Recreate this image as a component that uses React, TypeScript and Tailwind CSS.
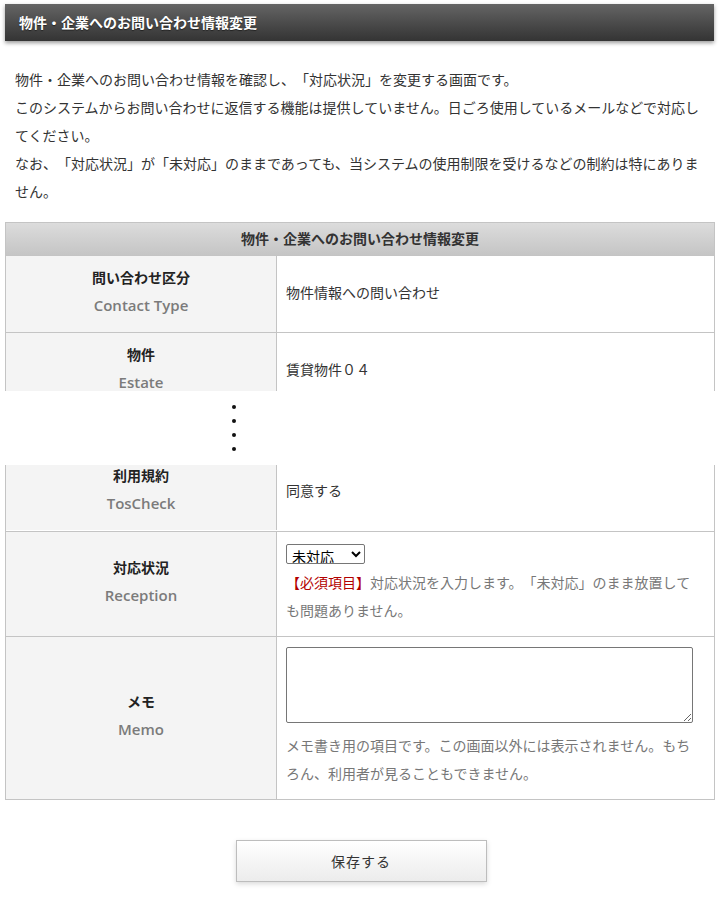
import React from "react";

const JP = "font-['Noto_Sans_CJK_JP',sans-serif]";
const EN = "font-['Open_Sans','Noto_Sans_CJK_JP',sans-serif]";

function LabelCell({ ja, en }: { ja: string; en: string }) {
  return (
    <div className="flex w-[271px] shrink-0 flex-col items-center justify-center border-r border-[#c4c4c4] bg-[#f4f4f4] pt-[7px] pb-[13px] text-center leading-[28px]">
      <span className="font-bold text-[#222]">{ja}</span>
      <span className={`${EN} text-[15px] font-semibold text-[#7b7b7b]`}>{en}</span>
    </div>
  );
}

function Row({
  ja,
  en,
  children,
  first = false,
}: {
  ja: string;
  en: string;
  children: React.ReactNode;
  first?: boolean;
}) {
  return (
    <div className={`flex ${first ? "" : "border-t border-[#c4c4c4]"}`}>
      <LabelCell ja={ja} en={en} />
      <div className="flex flex-1 flex-col justify-center pt-[8px] pb-[12px] pl-[9px] pr-[20px] leading-[28px] text-[#333]">
        {children}
      </div>
    </div>
  );
}

function Dots() {
  return (
    <div className="flex h-[74px] flex-col justify-center pl-[227px]">
      <div className="flex flex-col gap-[10px]">
        {[0, 1, 2, 3].map((i) => (
          <span key={i} className="block h-[4px] w-[4px] rounded-full bg-[#111]" />
        ))}
      </div>
    </div>
  );
}

export default function App() {
  return (
    <div className={`${JP} min-h-[899px] bg-white pt-[4px] text-[14px] text-[#333] [text-spacing-trim:space-all]`}>
      <div className="mx-[5px] flex h-[37px] items-center bg-gradient-to-b from-[#656565] to-[#343434] pl-[14px] shadow-[0_2px_4px_rgba(0,0,0,0.4)]">
        <h1 className="text-[14px] font-bold text-white [text-shadow:0_1px_1px_rgba(0,0,0,0.5)]">
          物件・企業へのお問い合わせ情報変更
        </h1>
      </div>

      <div className="mt-[24px] px-[15px] leading-[28px] text-[#333]">
        <p>物件・企業へのお問い合わせ情報を確認し、「対応状況」を変更する画面です。</p>
        <p>
          このシステムからお問い合わせに返信する機能は提供していません。日ごろ使用しているメールなどで対応してください。
        </p>
        <p>
          なお、「対応状況」が「未対応」のままであっても、当システムの使用制限を受けるなどの制約は特にありません。
        </p>
      </div>

      <div className="mx-[5px] mt-[17px] w-[710px]">
        <div className="border-x border-t border-[#c4c4c4]">
          <div className="flex h-[32px] items-center justify-center bg-gradient-to-b from-[#dcdcdc] to-[#c5c5c5] pb-[1px] font-bold text-[#333]">
            物件・企業へのお問い合わせ情報変更
          </div>
          <Row ja="問い合わせ区分" en="Contact Type">
            物件情報への問い合わせ
          </Row>
          <div className="h-[59px] overflow-hidden">
            <Row ja="物件" en="Estate">
              賃貸物件０４
            </Row>
          </div>
        </div>

        <Dots />

        <div className="border-x border-b border-[#c4c4c4]">
          <div className="h-[66px] overflow-hidden">
            <div className="-mt-[11px]">
              <Row ja="利用規約" en="TosCheck" first>
                同意する
              </Row>
            </div>
          </div>
          <Row ja="対応状況" en="Reception">
            <div className="flex h-[28px] items-center">
              <select
                defaultValue="未対応"
                className="h-[20px] w-[79px] rounded-[2px] border border-[#767676] bg-white py-0 pl-[1px] pr-0 text-[14px] leading-[18px] text-black"
              >
                <option>未対応</option>
                <option>対応中</option>
                <option>対応済</option>
              </select>
            </div>
            <p className="text-[#777]">
              <span className="text-[#b30000]">【必須項目】</span>
              対応状況を入力します。「未対応」のまま放置しても問題ありません。
            </p>
          </Row>
          <Row ja="メモ" en="Memo">
            <textarea className="mt-[2px] block h-[76px] w-[407px] rounded-[2px] border border-[#767676] bg-white p-[2px]" />
            <p className="mt-[8px] text-[#777]">
              メモ書き用の項目です。この画面以外には表示されません。もちろん、利用者が見ることもできません。
            </p>
          </Row>
        </div>
      </div>

      <div className="mt-[40px] flex justify-center pl-[3px]">
        <button
          type="button"
          className="h-[42px] w-[251px] border border-[#bdbdbd] bg-gradient-to-b from-white to-[#ececec] text-[14px] tracking-[1px] text-[#333] shadow-[0_2px_5px_rgba(0,0,0,0.15)]"
        >
          保存する
        </button>
      </div>
    </div>
  );
}
